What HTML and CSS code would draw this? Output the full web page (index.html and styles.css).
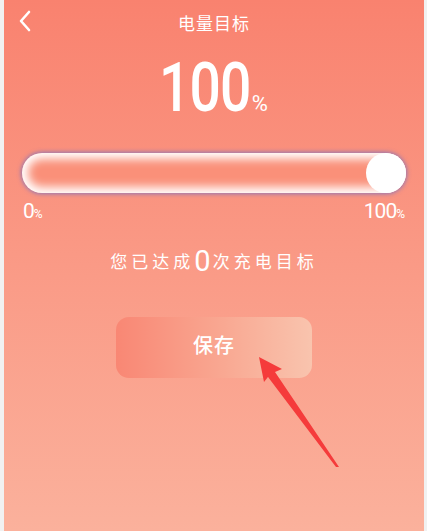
FILE: index.html
```html
<!DOCTYPE html>
<html lang="zh">
<head>
    <meta charset="UTF-8">
    <meta name="viewport" content="width=device-width, initial-scale=1.0">
    <title>电量目标</title>
    <link rel="stylesheet" href="styles.css">
</head>
<body>
    <div class="screen">
        <div class="nav-bar">
            <span class="back-btn">
                <svg width="14" height="22" viewBox="0 0 14 22">
                    <path d="M11 2 L3 11 L11 20" fill="none" stroke="#fff" stroke-width="2.6" stroke-linecap="round" stroke-linejoin="round"/>
                </svg>
            </span>
            <div class="nav-title">电量目标</div>
        </div>

        <div class="target-value">
            <span class="num">100</span><span class="unit">%</span>
        </div>

        <div class="slider">
            <div class="slider-track">
                <div class="slider-knob"></div>
            </div>
            <div class="slider-labels">
                <span><span class="lbl-num">0</span><span class="lbl-unit">%</span></span>
                <span><span class="lbl-num">100</span><span class="lbl-unit">%</span></span>
            </div>
        </div>

        <div class="achieve">您已达成<span class="count">0</span>次充电目标</div>

        <div class="btn-row">
            <button class="save-btn">保存</button>
        </div>

        <!-- 标注箭头 -->
        <svg class="pointer-arrow" width="427" height="531" viewBox="0 0 427 531">
            <polygon points="259,357 282,369 275,372 339,467 336,467 268,377 264,382" fill="#f53b3b"/>
        </svg>
    </div>
</body>
</html>
```

FILE: styles.css
```css
/* 基础样式 */
body {
    margin: 0;
    padding: 0;
    background: #f1f1f1;
    font-family: "Noto Sans CJK SC", Roboto, sans-serif;
}

.screen {
    position: relative;
    margin: 0 3px 0 4px;
    height: 531px;
    background: linear-gradient(180deg, #f9826f 0%, #fa9a86 50%, #fbb19c 100%);
    color: #fff;
    overflow: hidden;
}

.nav-bar {
    position: relative;
    height: 44px;
    display: flex;
    align-items: center;
    justify-content: center;
}

.back-btn {
    position: absolute;
    left: 14px;
    top: 10px;
}

.nav-title {
    font-size: 17px;
    letter-spacing: 1px;
}

.target-value {
    display: flex;
    justify-content: center;
    align-items: baseline;
    height: 88px;
    padding-left: 6px;
    font-family: Roboto, sans-serif;
    font-weight: 500;
}

.target-value .num {
    display: inline-block;
    font-size: 69px;
    line-height: 88px;
    letter-spacing: -1px;
    transform: scaleX(0.8);
    transform-origin: right center;
    margin-left: -30px;
}

.target-value .unit {
    font-size: 22px;
    font-weight: 400;
    margin-left: 1px;
}

/* 滑块 */
.slider {
    margin: 21px 18px 0 18px;
}

.slider-track {
    position: relative;
    height: 40px;
    border-radius: 20px;
    background: #fa9079;
    box-shadow: inset 0 0 10px 6px #fff, 0 0 4px 1px rgba(110, 110, 200, 0.75);
}

.slider-knob {
    position: absolute;
    right: 0;
    top: 0;
    width: 40px;
    height: 40px;
    border-radius: 50%;
    background: #fff;
}

.slider-labels {
    display: flex;
    justify-content: space-between;
    margin-top: 6px;
    padding: 0 1px;
    font-family: Roboto, sans-serif;
}

.lbl-num {
    display: inline-block;
    font-size: 21px;
    letter-spacing: -1px;
}

.lbl-unit {
    font-size: 12px;
}

.achieve {
    margin-top: 23px;
    text-align: center;
    font-size: 17px;
    letter-spacing: 4px;
    line-height: 30px;
}

.achieve .count {
    font-family: Roboto, sans-serif;
    font-size: 29px;
    font-weight: 400;
    vertical-align: -3px;
    letter-spacing: 2px;
}

.btn-row {
    display: flex;
    justify-content: center;
    margin-top: 41px;
}

.save-btn {
    width: 196px;
    height: 61px;
    border: none;
    border-radius: 13px;
    background: linear-gradient(90deg, #f98774 0%, #f9a892 55%, #f9c4ae 100%);
    color: #fff;
    font-family: "Noto Sans CJK SC", sans-serif;
    font-size: 20px;
    font-weight: 500;
    letter-spacing: 1px;
    padding: 0 0 6px 0;
}

.pointer-arrow {
    position: absolute;
    left: -4px;
    top: 0;
    pointer-events: none;
}
```
